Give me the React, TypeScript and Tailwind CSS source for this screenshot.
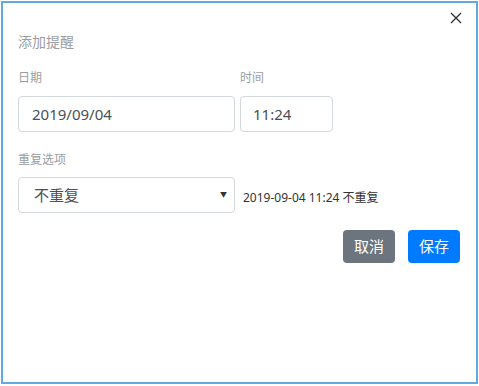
import React from 'react';

const font = { fontFamily: '"Noto Sans", "Noto Sans CJK SC", sans-serif' };

export default function App() {
    return (
        <div className="w-[479px] h-[386px] bg-white pl-[1px] pt-[1px]" style={font}>
            <div className="relative w-[477px] h-[383px] border-2 border-[#62a8e2] bg-white pl-[15px]">
                <button className="absolute right-[10px] top-[5px] w-5 h-5 flex items-center justify-center text-[#333]">
                    <svg width="12" height="12" viewBox="0 0 12 12" fill="none" stroke="currentColor" strokeWidth="1.4">
                        <path d="M1 1L11 11M11 1L1 11" />
                    </svg>
                </button>

                <p className="pt-[29px] text-[14px] leading-5 text-[#9a9ea3]">添加提醒</p>

                <div className="mt-[18px] flex gap-[5px]">
                    <div className="w-[217px]">
                        <p className="text-[12px] leading-4 text-[#9a9ea3]">日期</p>
                        <div className="mt-[10px] h-9 rounded border border-[#d3d8dd] flex items-center px-[13px] text-[15px] text-[#495057]">
                            2019/09/04
                        </div>
                    </div>
                    <div className="w-[93px]">
                        <p className="text-[12px] leading-4 text-[#9a9ea3]">时间</p>
                        <div className="mt-[10px] h-9 rounded border border-[#d3d8dd] flex items-center px-[12px] text-[15px] text-[#495057]">
                            11:24
                        </div>
                    </div>
                </div>

                <p className="mt-[20px] text-[12px] leading-4 text-[#9a9ea3]">重复选项</p>
                <div className="mt-[9px] flex items-center">
                    <div className="w-[217px] h-9 rounded border border-[#d3d8dd] flex items-center justify-between pl-[15px] pr-[7px] text-[15px] text-[#495057]">
                        <span>不重复</span>
                        <span className="text-[7px] text-[#333]">▼</span>
                    </div>
                    <span className="ml-2 mt-[5px] text-[12px] text-[#333]">2019-09-04 11:24 不重复</span>
                </div>

                <div className="mt-[17px] flex justify-end gap-[13px] pr-4">
                    <button className="w-[52px] h-[33px] rounded bg-[#6c757d] text-white text-[15px]">取消</button>
                    <button className="w-[52px] h-[33px] rounded bg-[#007bff] text-white text-[15px]">保存</button>
                </div>
            </div>
        </div>
    );
}
